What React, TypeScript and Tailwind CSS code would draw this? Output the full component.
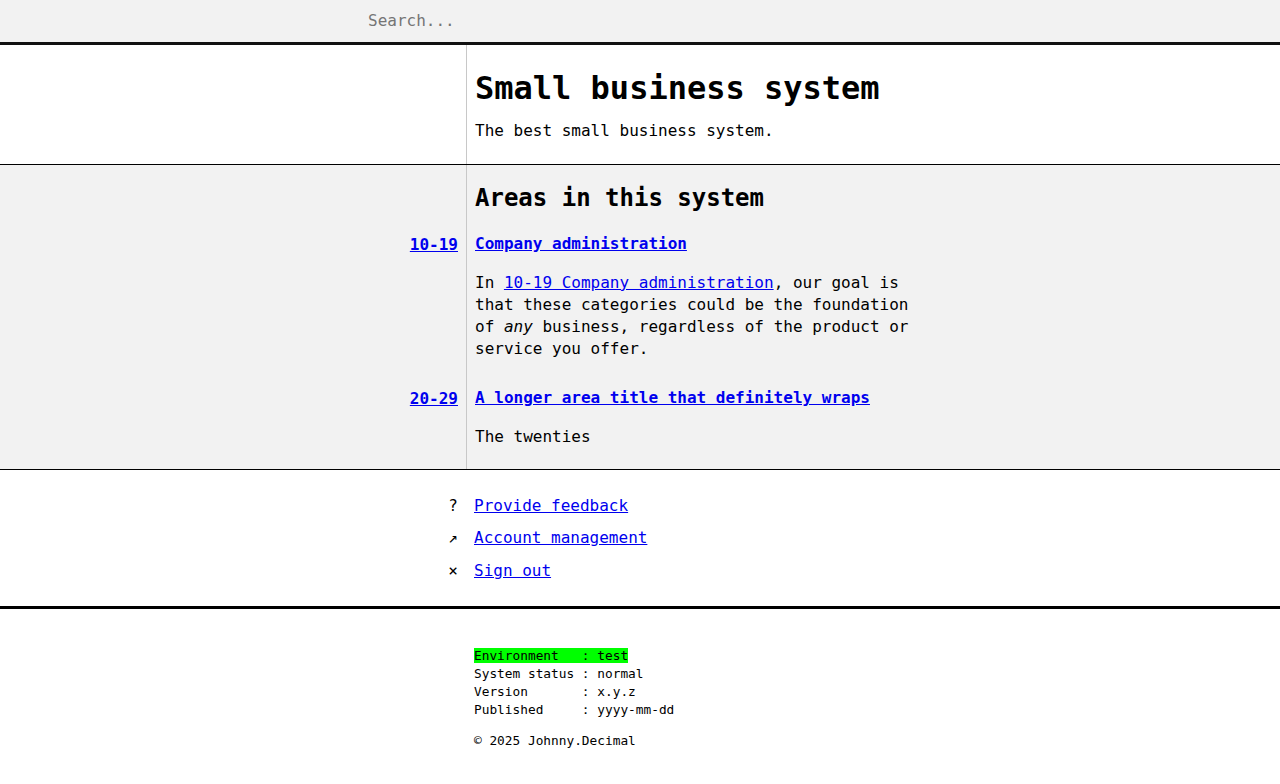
import React from "react";

const mono = { fontFamily: '"DejaVu Sans Mono", "Liberation Mono", monospace' };

function AreaRow({
  range,
  title,
  pt,
  pb,
  children,
}: {
  range: string;
  title: string;
  pt: string;
  pb?: string;
  children: React.ReactNode;
}) {
  return (
    <div className="grid grid-cols-[466px_1fr]">
      <div className={`${pt} ${pb ?? ""} pr-2 text-right`}>
        <a href="#" className="font-bold leading-[22px] text-[#0000ee] underline">
          {range}
        </a>
      </div>
      <div className={`${pt} ${pb ?? ""} border-l border-[#c8c8c8] pl-2`}>
        <a href="#" className="block font-bold leading-[22px] text-[#0000ee] underline">
          {title}
        </a>
        <div className="mt-[17px] w-[440px] leading-[22px]">{children}</div>
      </div>
    </div>
  );
}

export default function App() {
  return (
    <div className="min-h-[784px] bg-white text-[16px] text-black" style={mono}>
      {/* Header */}
      <header className="flex h-[45px] items-center border-b-[3px] border-[#111] bg-[#f2f2f2] pl-[360px]">
        <input
          type="text"
          placeholder="Search..."
          className="w-[600px] bg-transparent px-2 text-[16px] leading-[22px] text-black outline-none placeholder:text-[#757575]"
          style={mono}
        />
      </header>

      {/* Title section */}
      <section className="grid grid-cols-[466px_1fr] border-b border-black">
        <div />
        <div className="border-l border-[#c8c8c8] pb-[22px] pl-2 pt-6">
          <h1 className="text-[32px] font-bold leading-[38px]">Small business system</h1>
          <p className="mt-[13px] leading-[22px]">The best small business system.</p>
        </div>
      </section>

      {/* Areas section */}
      <section className="border-b border-black bg-[#f2f2f2]">
        <div className="grid grid-cols-[466px_1fr]">
          <div />
          <div className="border-l border-[#c8c8c8] pl-2 pt-[19px]">
            <h2 className="text-[24px] font-bold leading-[29px]">Areas in this system</h2>
          </div>
        </div>
        <AreaRow range="10-19" title="Company administration" pt="pt-[20px]">
          In{" "}
          <a href="#" className="text-[#0000ee] underline">
            10-19 Company administration
          </a>
          , our goal is that these categories could be the foundation of <em>any</em> business,
          regardless of the product or service you offer.
        </AreaRow>
        <AreaRow
          range="20-29"
          title="A longer area title that definitely wraps"
          pt="pt-[27px]"
          pb="pb-[21px]"
        >
          The twenties
        </AreaRow>
      </section>

      {/* Nav section */}
      <section className="flex flex-col gap-[10.5px] pb-[24.5px] pt-[24.5px]">
        {[
          ["?", "Provide feedback"],
          ["↗", "Account management"],
          ["×", "Sign out"],
        ].map(([sym, label]) => (
          <div key={label} className="grid grid-cols-[466px_1fr] leading-[22px]">
            <span className="pr-2 text-right">{sym}</span>
            <a href="#" className="pl-2 text-[#0000ee] underline">
              {label}
            </a>
          </div>
        ))}
      </section>

      {/* Footer */}
      <footer className="grid grid-cols-[466px_1fr] border-t-[3px] border-black pb-6 pt-[37.5px] text-[12.8px]">
        <div />
        <div className="pl-2">
          <pre className="leading-[18px]" style={mono}>
            <span className="bg-[#00ff00]">{"Environment   : test"}</span>
            {"\nSystem status : normal\nVersion       : x.y.z\nPublished     : yyyy-mm-dd"}
          </pre>
          <p className="mt-[13px] leading-[18px]">© 2025 Johnny.Decimal</p>
        </div>
      </footer>
    </div>
  );
}
